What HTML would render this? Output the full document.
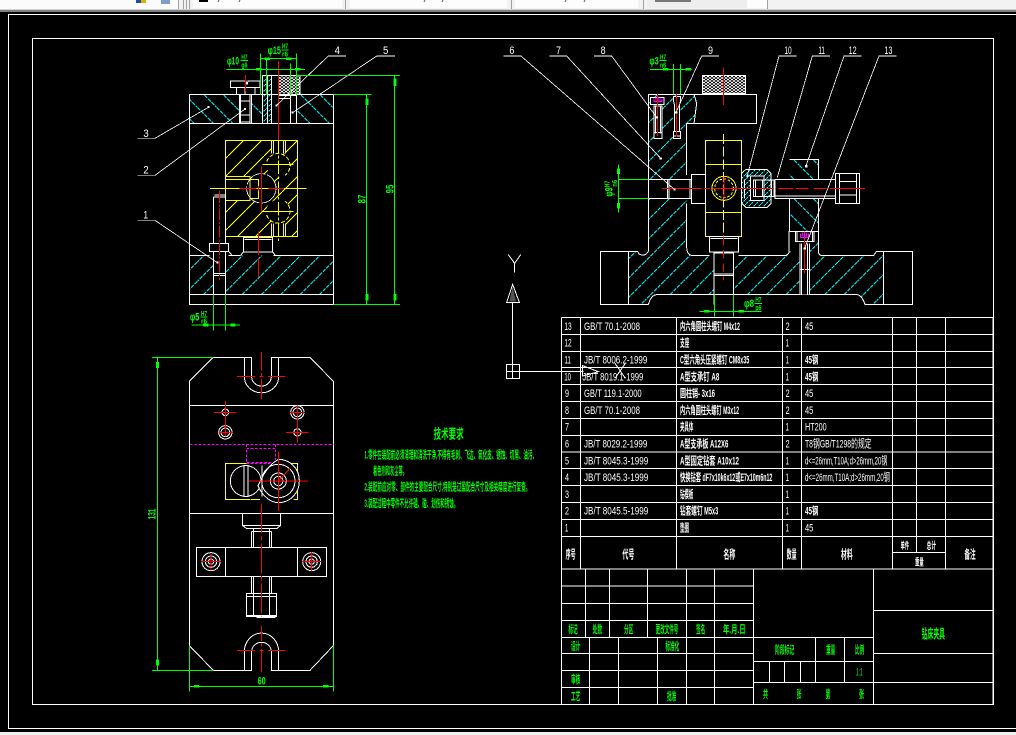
<!DOCTYPE html>
<html><head><meta charset="utf-8"><title>CAD drawing</title>
<style>
html,body{margin:0;padding:0;background:#000}
body{width:1016px;height:735px;overflow:hidden;position:relative}
svg{position:absolute;left:0;top:0;display:block}
.w{stroke:#fff;fill:none;stroke-width:3}
.thin{stroke:#fff;fill:none;stroke-width:2.4}
.g{stroke:#0f0;fill:none;stroke-width:3}
.r{stroke:#f00;fill:none;stroke-width:3}
.y{stroke:#ff0;fill:none;stroke-width:3}
.m{stroke:#f0f;fill:none;stroke-width:3}
.k{fill:#000;stroke:none}
.gf{fill:#0f0;stroke:none}
.wf{fill:#fff;stroke:none}
text{font-family:"Liberation Sans","Noto Sans CJK SC",sans-serif}
.t{fill:#fff;font-size:34px}
.c{fill:#fff;font-size:33px;font-weight:700;font-family:"Liberation Sans","Noto Sans CJK SC",sans-serif}
.gt{fill:#0f0;font-size:33px;font-weight:700}
.n{fill:#fff;font-size:34px}
.d{fill:#0f0;font-size:34px;font-weight:700}
</style></head><body>
<svg width="1016" height="735" viewBox="0 0 1016 735" xmlns="http://www.w3.org/2000/svg" shape-rendering="crispEdges">
<defs>
<pattern id="hb" width="58" height="58" patternUnits="userSpaceOnUse"><path d="M0 0L58 58" stroke="#0ff" stroke-width="2.6" stroke-dasharray="12 3"/></pattern>
<pattern id="hf" width="58" height="58" patternUnits="userSpaceOnUse"><path d="M58 0L0 58" stroke="#0ff" stroke-width="2.6" stroke-dasharray="12 3"/></pattern>
<pattern id="hd" width="15" height="15" patternUnits="userSpaceOnUse"><path d="M15 0L0 15" stroke="#0ff" stroke-width="2.4" stroke-dasharray="6 3"/></pattern>
<pattern id="hy" width="54" height="54" patternUnits="userSpaceOnUse"><path d="M54 0L0 54" stroke="#ff0" stroke-width="2.6"/></pattern>
<pattern id="kn" width="12" height="9" patternUnits="userSpaceOnUse"><rect width="12" height="9" fill="#000"/><path d="M0 0L6 4.5L12 0M0 9L6 4.5L12 9" stroke="#fff" stroke-width="2.6" fill="none"/></pattern>
</defs>

<!-- window chrome -->
<rect x="0" y="0" width="1016" height="9" fill="#f2f2f2"/>
<rect x="0" y="0" width="178" height="9" fill="#fbfbfb"/>
<rect x="193" y="0" width="149" height="8" fill="#fdfdfd"/>
<rect x="350" y="0" width="157" height="8" fill="#fdfdfd"/>
<rect x="515" y="0" width="123" height="8" fill="#fdfdfd"/>
<rect x="647" y="0" width="100" height="8" fill="#eeeeee"/>
<rect x="747" y="0" width="21" height="8" fill="#fdfdfd"/>
<path d="M178.5 0V9M183.5 0V9M186.5 0V9M189.5 0V9M345.5 0V9M511.5 0V9M643.5 0V9M767.5 0V9" stroke="#a0a0a0" stroke-width="1"/>
<rect x="136" y="0" width="5" height="3" fill="#1b4fa0"/><rect x="141" y="0" width="5" height="3" fill="#e0b000"/>
<rect x="161" y="0" width="9" height="4" fill="#7f9fc8"/>
<rect x="199" y="0" width="9" height="2" fill="#000"/>
<path d="M219 0l-1 2M240 0l-1 2M425 0l-1 2M443 0l-1 2M566 0l-1 2M585 0l-1 2" stroke="#555" stroke-width="1"/>
<rect x="655" y="0" width="36" height="2" fill="#777"/>
<rect x="0" y="9" width="1016" height="1" fill="#d0d0d0"/>
<rect x="0" y="10" width="1016" height="2" fill="#808080"/>
<rect x="0" y="12" width="1016" height="720" fill="#000"/>
<rect x="0" y="732" width="1016" height="3" fill="#f0f0f0"/>
<path d="M1016 14.5H8.5V728.5H1016" stroke="#fff" fill="none" stroke-width="1"/>
<rect x="32.5" y="38.5" width="961" height="666" stroke="#fff" fill="none" stroke-width="1"/>

<!-- LEFT VIEW -->
<g transform="translate(120,30) scale(.33333)">
<path d="M208 193H358V281H208Z" fill="url(#hb)"/>
<path d="M530 193H640V281H530Z" fill="url(#hb)"/>
<path d="M394 193H427V281H394Z" fill="url(#hb)"/>
<path d="M427 136H455V281H427Z" fill="url(#hd)"/>
<path d="M208 676H280V793H208Z" fill="url(#hf)"/>
<path d="M316 676H640V793H316Z" fill="url(#hf)"/>
<path class="w" d="M208 193H640V823H208ZM208 281H640M208 676H268M326 676H336M460 676H640M208 793H640"/>
<!-- upper items -->
<path class="w" d="M331 153H378L381 165L384 153H420V173H331ZM350 173V193H405V173M362 193V281M390 193V281M358 193V281M394 193V281M362 213H390M362 255H390M362 276H390M375 193V173"/>
<path class="w" d="M427 136H540V190H530V281M427 136V281M455 136V281M475 136V190M512 193V281M475 196H530M442 136V281M475 205H512"/>
<rect x="476" y="140" width="62" height="50" fill="url(#kn)"/>
<path class="r" d="M475 93V330M376 135V185"/>
<!-- yellow block -->
<rect x="316" y="331" width="217" height="289" fill="url(#hy)"/>
<circle cx="475" cy="405" r="36" class="k"/><circle cx="475" cy="545" r="36" class="k"/>
<rect x="455" y="331" width="42" height="40" class="k"/><rect x="455" y="580" width="42" height="40" class="k"/>
<rect x="316" y="440" width="100" height="72" class="k"/>
<circle cx="424" cy="475" r="44" class="k"/>
<path class="y" d="M316 331H533V620H316ZM455 331V371M460 331V371M490 331V371M497 331V371M455 580V620M460 580V620M490 580V620M497 580V620M427 403H520M427 545H520M316 440H390V512H316M316 448H415V505H390V448"/>
<path class="y" stroke-dasharray="12 6" d="M440 395A36 36 0 0 1 510 405A36 36 0 0 1 495 436M440 555A36 36 0 0 0 510 545A36 36 0 0 0 495 514"/>
<circle cx="424" cy="475" r="44" class="thin" stroke-dasharray="70 5"/>
<path class="y" d="M270 475H560"/>
<path class="y" stroke-dasharray="40 7 8 7" d="M475 330V640"/>
<path class="r" d="M358 475H410M445 475H492M424 410V545M416 468V482"/>
<!-- left pin -->
<path class="k" d="M280 500H316V640H280Z"/>
<path class="w" d="M283 495H316M280 501H316M280 501V640M316 495V640M268 640H326V664H268ZM280 664V793M316 664V793M280 730H316M280 737H316M280 793V823M316 793V823"/>
<path class="r" stroke-dasharray="36 5 6 5" d="M298 483V750"/>
<!-- lower block -->
<path class="w" d="M370 622H458V666H370ZM373 628H455M370 666L362 676M458 666L466 676M326 664L336 676H362M466 676H480"/>
<path class="r" stroke-dasharray="70 8 60 6" d="M416 605V750"/>
<!-- leaders -->
<g class="thin" stroke-width="2.4">
<path d="M52 325H105L265 232M52 436H105L375 237M52 571H105L292 698M678 78H625L470 226M825 78H770L518 248"/>
</g>
<path class="wf" d="M262 228h6v6h-6zM372 234h6v6h-6zM289 695h6v6h-6zM466 223h7v7h-7zM515 245h6v6h-6z"/>
<text class="n" x="70" y="321" textLength="16" lengthAdjust="spacingAndGlyphs">3</text>
<text class="n" x="70" y="431" textLength="16" lengthAdjust="spacingAndGlyphs">2</text>
<text class="n" x="70" y="565" textLength="14" lengthAdjust="spacingAndGlyphs">1</text>
<text class="n" x="644" y="72" textLength="16" lengthAdjust="spacingAndGlyphs">4</text>
<text class="n" x="789" y="72" textLength="16" lengthAdjust="spacingAndGlyphs">5</text>
<!-- dims -->
<path class="g" d="M530 136H840M640 193H755M640 823H840M740 193V823M824 136V823M420 86H530M421 70V195M530 70V195M320 118H555M440 86V195M511 100V195M215 885H360M280 793V902M316 793V902"/>
<path class="gf" d="M736 205h9v20h-9zM736 792h9v20h-9zM820 146h9v22h-9zM820 792h9v20h-9zM434 82h16v8h-16zM498 82h16v8h-16zM408 114h16v8h-16zM525 114h16v8h-16zM249 881h16v8h-16zM331 881h16v8h-16z"/>
<text class="d" x="0" y="0" transform="translate(737,520) rotate(-90)" textLength="26" lengthAdjust="spacingAndGlyphs">87</text>
<text class="d" x="0" y="0" transform="translate(821,490) rotate(-90)" textLength="26" lengthAdjust="spacingAndGlyphs">95</text>
<text class="d" x="443" y="72" textLength="40" lengthAdjust="spacingAndGlyphs">φ15</text>
<text class="d" style="font-size:22px" x="486" y="56" textLength="18" lengthAdjust="spacingAndGlyphs">H7</text><path class="g" d="M485 60H505"/>
<text class="d" style="font-size:22px" x="486" y="80" textLength="18" lengthAdjust="spacingAndGlyphs">r6</text>
<text class="d" x="321" y="104" textLength="36" lengthAdjust="spacingAndGlyphs">φ10</text>
<text class="d" style="font-size:22px" x="364" y="88" textLength="18" lengthAdjust="spacingAndGlyphs">H7</text><path class="g" d="M362 92H384"/>
<text class="d" style="font-size:22px" x="364" y="113" textLength="18" lengthAdjust="spacingAndGlyphs">g6</text>
<text class="d" x="210" y="871" textLength="28" lengthAdjust="spacingAndGlyphs">φ5</text>
<text class="d" style="font-size:22px" x="243" y="858" textLength="18" lengthAdjust="spacingAndGlyphs">H7</text><path class="g" d="M241 861H263"/>
<text class="d" style="font-size:22px" x="243" y="880" textLength="18" lengthAdjust="spacingAndGlyphs">r6</text>
</g>

<!-- RIGHT VIEW -->
<g transform="translate(490,30) scale(.33333)">
<path fill="url(#hf)" d="M475 193H612L620 220L610 281H590V448H475ZM475 505H590V650Q590 677 610 677H672V794H500Q488 794 480 810L475 823H415V664H443L447 672Q465 680 475 664Z"/>
<path fill="url(#hf)" d="M731 677H897V664H930V794H731ZM958 635H985V664L1000 677H1150L1160 664H1180V823H1125Q1115 794 1100 794H958Z"/>
<path fill="url(#hb)" d="M898 388H986V448H898ZM898 505H986V605H898Z"/>
<path fill="url(#hd)" d="M768 418H830L843 430V520L830 533H768L755 520V430Z"/>
<path class="k" d="M482 202H522V224H516V326H492V224H482ZM550 200H572V326H550Z"/>
<path class="w" d="M415 664H331V823H475L480 810Q488 794 500 794H1100Q1115 794 1125 823H1268V664H1160L1150 677H1000Q985 677 985 664V605M415 664V823M1180 664V823M415 664H443L447 672Q465 680 472 668L475 664V193H800V281H612L620 220L612 193M590 281H612M590 281V435M590 520V650Q590 677 610 677H658M746 677H880Q897 677 897 664V605H986M475 448H533V505H475M590 448H604M590 505H604M898 388H986V448M898 505V605M986 388V448M986 505V605"/>
<!-- knurl -->
<rect x="638" y="137" width="128" height="53" fill="url(#kn)"/>
<path class="w" d="M638 137H766V190H638Z"/>
<!-- yellow -->
<path class="y" d="M646 331H755V620H646ZM646 403H755M646 548H755"/>
<circle cx="702" cy="475" r="36" class="y"/><circle cx="702" cy="475" r="28" class="y" stroke-dasharray="8 5"/>
<path class="y" stroke-dasharray="30 8" d="M700 312V620"/>
<!-- left pin and block -->
<path class="w" d="M533 448H604V505H533ZM537 448V505M600 448V505M604 433H646V520H604Z"/>
<!-- right mechanism -->
<path class="w" d="M768 418H830L843 430V520L830 533H768L755 520V430ZM763 448V505"/>
<path class="k" d="M782 438H822V512H782Z"/>
<path class="w" d="M782 438H822V512H782ZM790 450H852V500H790ZM797 450V500M818 450V500M845 450V500"/>
<path class="k" d="M855 448H1036V505H855Z"/>
<path class="w" d="M855 448H1036V505H855ZM855 498H1036M1036 430H1108V520H1036ZM1048 430V520M1100 430V520M1048 455H1100M1048 495H1100"/>
<path class="w" d="M658 666H746V620H658ZM662 625H742M672 666V794M731 666V794M672 732H731M672 737H731M672 669H731M672 794V823M731 794V823"/>
<!-- screw 13 -->
<path class="k" d="M916 605H972V635H958V794H930V635H916Z"/>
<path class="w" d="M916 605H972V635H916ZM921 605V635M967 605V635M930 640V794M958 640V794M935 640V794M953 640V794M930 718H958"/>
<path class="m" d="M932 610V622H956V610M944 605V628M938 608V620M950 608V620"/>
<path class="r" d="M944 628V730"/>
<!-- top-left screws -->
<path class="w" d="M482 202H522V224H482ZM492 228H516V326H492ZM497 228V310M512 228V310M492 308H516"/>
<path class="m" d="M492 205V214H516V205M504 200V217M498 203V212M510 203V212"/>
<path class="r" d="M503 190V318"/>
<path class="w" d="M550 200H572V210L568 228V304H572V326H550V304H554V228L550 210ZM550 304H572M550 318H572"/>
<path class="r" d="M560 190V320"/>
<!-- center lines -->
<path class="r" d="M700 112V225"/>
<path class="r" stroke-dasharray="120 6 18 12 180 12 46 6 40 14 40 10 230 5" d="M516 475H1125"/>
<path class="r" d="M667 475H738M702 440V510"/>
<path class="r" stroke-dasharray="26 14" d="M700 620V750"/>
<!-- leaders -->
<path class="thin" d="M40 78H93L553 478M178 78H230L512 385M312 78H365L500 262M687 78H635L558 247M920 78H867L772 437M1020 78H967L862 442M1115 78H1062L948 408M1220 78H1167L944 655"/>
<path class="wf" d="M550 475h7v7h-7zM509 382h7v7h-7zM497 259h7v7h-7zM555 244h7v7h-7zM769 434h7v7h-7zM945 405h7v7h-7zM941 652h7v7h-7z"/>
<text class="n" x="58" y="72" textLength="15" lengthAdjust="spacingAndGlyphs">6</text>
<text class="n" x="198" y="72" textLength="15" lengthAdjust="spacingAndGlyphs">7</text>
<text class="n" x="332" y="72" textLength="15" lengthAdjust="spacingAndGlyphs">8</text>
<text class="n" x="654" y="72" textLength="15" lengthAdjust="spacingAndGlyphs">9</text>
<text class="n" x="883" y="72" textLength="22" lengthAdjust="spacingAndGlyphs">10</text>
<text class="n" x="985" y="72" textLength="20" lengthAdjust="spacingAndGlyphs">11</text>
<text class="n" x="1076" y="72" textLength="24" lengthAdjust="spacingAndGlyphs">12</text>
<text class="n" x="1183" y="72" textLength="24" lengthAdjust="spacingAndGlyphs">13</text>
<!-- dims -->
<path class="g" d="M480 118H604M550 102V193M572 102V193M385 403V548M385 448H475M385 505H475M628 844H815M673 794V860M730 794V860"/>
<path class="gf" d="M519 114h16v8h-16zM587 114h16v8h-16zM381 416h9v16h-9zM381 519h9v16h-9zM642 840h16v8h-16zM746 840h16v8h-16z"/>
<text class="d" x="478" y="104" textLength="28" lengthAdjust="spacingAndGlyphs">φ3</text>
<text class="d" style="font-size:22px" x="510" y="88" textLength="18" lengthAdjust="spacingAndGlyphs">H7</text><path class="g" d="M508 92H530"/>
<text class="d" style="font-size:22px" x="510" y="112" textLength="18" lengthAdjust="spacingAndGlyphs">n6</text>
<text class="d" transform="translate(368,500) rotate(-90)" x="0" y="0" textLength="28" lengthAdjust="spacingAndGlyphs">φ9</text>
<text class="d" style="font-size:22px" transform="translate(358,472) rotate(-90)" x="0" y="0" textLength="20" lengthAdjust="spacingAndGlyphs">H7</text>
<text class="d" style="font-size:22px" transform="translate(381,470) rotate(-90)" x="0" y="0" textLength="20" lengthAdjust="spacingAndGlyphs">n6</text>
<text class="d" x="762" y="831" textLength="30" lengthAdjust="spacingAndGlyphs">φ8</text>
<text class="d" style="font-size:22px" x="796" y="816" textLength="18" lengthAdjust="spacingAndGlyphs">H7</text><path class="g" d="M794 820H816"/>
<text class="d" style="font-size:22px" x="796" y="840" textLength="18" lengthAdjust="spacingAndGlyphs">p6</text>
</g>

<!-- UCS icon -->
<g transform="translate(500,250) scale(.33333)">
<path class="w" d="M25 14L44 40L62 14M44 40V68M38 103L20 157H58ZM38 157V343M19 343H59V385H19ZM38 343V385M19 364H59M59 364H250M248 347L295 365L248 378ZM345 340L376 385M376 340L345 385"/>
<path d="M38 108L28 155H48Z" fill="#555"/>
</g>

<!-- BOTTOM-LEFT VIEW -->
<g transform="translate(130,340) scale(.33333)">
<path class="w" d="M178 124L250 52H365V110A29.5 28 0 0 0 424 110V52H540L610 124V917L540 991H424V935A29.5 28 0 0 0 365 935V991H250L178 917ZM343 52V110A51 48 0 0 0 446 110V52M343 991V935A51 55 0 0 1 446 935V991M178 196H610M178 520H610"/>
<path class="r" d="M321 109H375M414 109H467M388 109H400M321 931H375M414 931H467M388 931H400"/>
<path class="r" stroke-dasharray="55 8 10 8 60 8" d="M394 36V182"/>
<path class="r" stroke-dasharray="45 7 10 7 70" d="M394 858V1005"/>
<!-- holes -->
<circle cx="286" cy="217" r="10" class="w"/>
<circle cx="286" cy="277" r="20" class="w"/><circle cx="286" cy="277" r="13" class="w"/>
<circle cx="502" cy="217" r="20" class="w"/><circle cx="502" cy="217" r="13" class="w"/>
<circle cx="502" cy="277" r="11" class="w"/>
<path class="r" d="M252 217H320M286 183V290M266 277H309M480 217H524M502 197V308M468 277H536"/>
<!-- magenta -->
<path class="m" stroke-dasharray="8 5" d="M180 313H610M349 325H437V367H349ZM349 313V325M437 313V325"/>
<!-- yellow -->
<path class="y" d="M360 479H286V370H349M440 370H503V479H490M362 479H390"/>
<path class="m" d="M349 370H437" stroke-dasharray="8 5"/>
<!-- mechanism -->
<circle cx="347" cy="423" r="46" class="w"/>
<path class="k" d="M342 376H354V470H342Z"/>
<path class="w" d="M342 376H354V470H342Z"/>
<path class="k" d="M445 358A65 65 0 1 1 445 488Q410 488 385 440L400 405Q420 358 445 358Z"/>
<path class="w" d="M445 358C480 358 508 385 508 423C508 460 480 488 445 488C420 488 395 465 384 437L400 405Q420 372 445 358Z"/>
<circle cx="445" cy="423" r="50" class="w"/><circle cx="445" cy="423" r="24" class="w"/><circle cx="445" cy="423" r="14" class="w"/>
<path class="w" d="M396 376V470"/>
<path class="r" d="M357 423H534M445 335V513M445 423L480 385"/>
<!-- lower -->
<path class="w" d="M337 520V556H452V520M337 556L350 566H440L452 556M370 566V575H418V566M364 575H425M364 575V622M370 575V622M418 575V622M425 575V622M199 622H590V710H199ZM286 622V710M502 622V710M364 710V760M370 710V760M418 710V760M425 710V760M349 760H440V830H349ZM370 760V830M418 760V830M349 770H440M349 826H440M380 832H436"/>
<circle cx="243" cy="665" r="27" class="w"/><circle cx="243" cy="665" r="17" class="w"/><circle cx="243" cy="665" r="8" class="w"/>
<circle cx="545" cy="665" r="27" class="w"/><circle cx="545" cy="665" r="17" class="w"/><circle cx="545" cy="665" r="8" class="w"/>
<path class="r" d="M214 665H272M243 640V692M516 665H574M545 636V694"/>
<path class="r" stroke-dasharray="90 8 14 8" d="M394 490V830"/>
<!-- dims -->
<path class="g" d="M66 52H250M66 991H250M82 52V991M178 917V1055M610 917V1055M178 1039H610"/>
<path class="gf" d="M78 66h9v18h-9zM78 959h9v18h-9zM192 1035h15v8h-15zM579 1035h16v8h-16z"/>
<text class="d" transform="translate(76,538) rotate(-90)" x="0" y="0" textLength="32" lengthAdjust="spacingAndGlyphs">131</text>
<text class="d" x="383" y="1034" textLength="24" lengthAdjust="spacingAndGlyphs">60</text>
</g>

<!-- TECH REQUIREMENTS -->
<g transform="translate(355,415) scale(.33333)">
<text class="gt" style="font-size:40px" x="236" y="70" textLength="90" lengthAdjust="spacingAndGlyphs">技术要求</text>
<text class="gt" x="28" y="131" textLength="518" lengthAdjust="spacingAndGlyphs">1.零件在装配前必须清理和清洗干净,不得有毛刺、飞边、氧化皮、锈蚀、切屑、油污、</text>
<text class="gt" x="54" y="178" textLength="102" lengthAdjust="spacingAndGlyphs">着色剂和灰尘等。</text>
<text class="gt" x="28" y="227" textLength="498" lengthAdjust="spacingAndGlyphs">2.装配前应对零、部件的主要配合尺寸,特别是过盈配合尺寸及相关精度进行复查。</text>
<text class="gt" x="28" y="276" textLength="282" lengthAdjust="spacingAndGlyphs">3.装配过程中零件不允许磕、碰、划伤和锈蚀。</text>
</g>

<!-- PARTS TABLE -->
<g transform="translate(555,310) scale(.33333)">
<path class="w" d="M19 22H1314V778M19 22V778M19 73H1314M19 124H1314M19 173H1314M19 224H1314M19 275H1314M19 325H1314M19 376H1314M19 426H1314M19 476H1314M19 527H1314M19 578H1314M19 629H1314M19 680H1314M76 22V778M364 22V778M682 22V778M739 22V778M1012 22V778M1084 22V727M1171 22V778M1012 727H1171"/>
<text class="t" x="28" y="60" textLength="22" lengthAdjust="spacingAndGlyphs">13</text><text class="t" x="87" y="60" textLength="168" lengthAdjust="spacingAndGlyphs">GB/T 70.1-2008</text><text class="c" x="375" y="60" textLength="180" lengthAdjust="spacingAndGlyphs">内六角圆柱头螺钉 M4x12</text><text class="t" x="692" y="60" textLength="12" lengthAdjust="spacingAndGlyphs">2</text><text class="t" x="750" y="60" textLength="25" lengthAdjust="spacingAndGlyphs">45</text>
<text class="t" x="28" y="110" textLength="22" lengthAdjust="spacingAndGlyphs">12</text><text class="c" x="375" y="110" textLength="28" lengthAdjust="spacingAndGlyphs">支座</text><text class="t" x="692" y="110" textLength="10" lengthAdjust="spacingAndGlyphs">1</text>
<text class="t" x="28" y="161" textLength="20" lengthAdjust="spacingAndGlyphs">11</text><text class="t" x="87" y="161" textLength="190" lengthAdjust="spacingAndGlyphs">JB/T 8006.2-1999</text><text class="c" x="375" y="161" textLength="208" lengthAdjust="spacingAndGlyphs">C型六角头压紧螺钉 CM8x35</text><text class="t" x="692" y="161" textLength="10" lengthAdjust="spacingAndGlyphs">1</text><text class="c" x="750" y="161" textLength="40" lengthAdjust="spacingAndGlyphs">45钢</text>
<text class="t" x="28" y="211" textLength="20" lengthAdjust="spacingAndGlyphs">10</text><text class="t" x="82" y="211" textLength="183" lengthAdjust="spacingAndGlyphs">JB/T 8019.1-1999</text><text class="c" x="375" y="211" textLength="118" lengthAdjust="spacingAndGlyphs">A型支承钉 A8</text><text class="t" x="692" y="211" textLength="10" lengthAdjust="spacingAndGlyphs">1</text><text class="c" x="750" y="211" textLength="40" lengthAdjust="spacingAndGlyphs">45钢</text>
<text class="t" x="30" y="261" textLength="12" lengthAdjust="spacingAndGlyphs">9</text><text class="t" x="87" y="261" textLength="173" lengthAdjust="spacingAndGlyphs">GB/T 119.1-2000</text><text class="c" x="375" y="261" textLength="105" lengthAdjust="spacingAndGlyphs">圆柱销- 3x16</text><text class="t" x="692" y="261" textLength="12" lengthAdjust="spacingAndGlyphs">2</text><text class="t" x="750" y="261" textLength="25" lengthAdjust="spacingAndGlyphs">45</text>
<text class="t" x="30" y="312" textLength="12" lengthAdjust="spacingAndGlyphs">8</text><text class="t" x="87" y="312" textLength="168" lengthAdjust="spacingAndGlyphs">GB/T 70.1-2008</text><text class="c" x="375" y="312" textLength="177" lengthAdjust="spacingAndGlyphs">内六角圆柱头螺钉 M3x12</text><text class="t" x="692" y="312" textLength="12" lengthAdjust="spacingAndGlyphs">2</text><text class="t" x="750" y="312" textLength="25" lengthAdjust="spacingAndGlyphs">45</text>
<text class="t" x="30" y="362" textLength="12" lengthAdjust="spacingAndGlyphs">7</text><text class="c" x="375" y="362" textLength="40" lengthAdjust="spacingAndGlyphs">夹具体</text><text class="t" x="692" y="362" textLength="10" lengthAdjust="spacingAndGlyphs">1</text><text class="t" x="750" y="362" textLength="65" lengthAdjust="spacingAndGlyphs">HT200</text>
<text class="t" x="30" y="413" textLength="12" lengthAdjust="spacingAndGlyphs">6</text><text class="t" x="87" y="413" textLength="190" lengthAdjust="spacingAndGlyphs">JB/T 8029.2-1999</text><text class="c" x="375" y="413" textLength="145" lengthAdjust="spacingAndGlyphs">A型支承板 A12X6</text><text class="t" x="692" y="413" textLength="12" lengthAdjust="spacingAndGlyphs">2</text><text class="t" x="750" y="413" textLength="200" lengthAdjust="spacingAndGlyphs">T8钢GB/T1298的规定</text>
<text class="t" x="30" y="463" textLength="12" lengthAdjust="spacingAndGlyphs">5</text><text class="t" x="87" y="463" textLength="193" lengthAdjust="spacingAndGlyphs">JB/T 8045.3-1999</text><text class="c" x="375" y="463" textLength="177" lengthAdjust="spacingAndGlyphs">A型固定钻套 A10x12</text><text class="t" x="692" y="463" textLength="10" lengthAdjust="spacingAndGlyphs">1</text><text class="t" x="750" y="463" textLength="247" lengthAdjust="spacingAndGlyphs">d&lt;=26mm,T10A;d&gt;26mm,20钢</text>
<text class="t" x="30" y="513" textLength="12" lengthAdjust="spacingAndGlyphs">4</text><text class="t" x="87" y="513" textLength="193" lengthAdjust="spacingAndGlyphs">JB/T 8045.3-1999</text><text class="c" x="375" y="513" textLength="277" lengthAdjust="spacingAndGlyphs">快换钻套 dF7x10k6x12或E7x10m6n12</text><text class="t" x="692" y="513" textLength="10" lengthAdjust="spacingAndGlyphs">1</text><text class="t" x="750" y="513" textLength="255" lengthAdjust="spacingAndGlyphs">d&lt;=26mm,T10A;d&gt;26mm,20钢</text>
<text class="t" x="30" y="564" textLength="12" lengthAdjust="spacingAndGlyphs">3</text><text class="c" x="375" y="564" textLength="40" lengthAdjust="spacingAndGlyphs">钻模板</text><text class="t" x="692" y="564" textLength="10" lengthAdjust="spacingAndGlyphs">1</text>
<text class="t" x="30" y="614" textLength="12" lengthAdjust="spacingAndGlyphs">2</text><text class="t" x="87" y="614" textLength="193" lengthAdjust="spacingAndGlyphs">JB/T 8045.5-1999</text><text class="c" x="375" y="614" textLength="115" lengthAdjust="spacingAndGlyphs">钻套螺钉 M5x3</text><text class="t" x="692" y="614" textLength="10" lengthAdjust="spacingAndGlyphs">1</text><text class="c" x="750" y="614" textLength="40" lengthAdjust="spacingAndGlyphs">45钢</text>
<text class="t" x="30" y="665" textLength="10" lengthAdjust="spacingAndGlyphs">1</text><text class="c" x="375" y="665" textLength="27" lengthAdjust="spacingAndGlyphs">垫圈</text><text class="t" x="692" y="665" textLength="10" lengthAdjust="spacingAndGlyphs">1</text><text class="t" x="750" y="665" textLength="25" lengthAdjust="spacingAndGlyphs">45</text>
<text class="c" style="font-size:36px" x="32" y="746" textLength="30" lengthAdjust="spacingAndGlyphs">序号</text>
<text class="c" style="font-size:36px" x="202" y="746" textLength="36" lengthAdjust="spacingAndGlyphs">代号</text>
<text class="c" style="font-size:36px" x="505" y="746" textLength="36" lengthAdjust="spacingAndGlyphs">名称</text>
<text class="c" style="font-size:36px" x="695" y="746" textLength="30" lengthAdjust="spacingAndGlyphs">数量</text>
<text class="c" style="font-size:36px" x="858" y="746" textLength="35" lengthAdjust="spacingAndGlyphs">材料</text>
<text class="c" style="font-size:29px" x="1037" y="717" textLength="25" lengthAdjust="spacingAndGlyphs">单件</text>
<text class="c" style="font-size:29px" x="1115" y="717" textLength="28" lengthAdjust="spacingAndGlyphs">总计</text>
<text class="c" style="font-size:29px" x="1080" y="766" textLength="26" lengthAdjust="spacingAndGlyphs">重量</text>
<text class="c" style="font-size:36px" x="1228" y="746" textLength="34" lengthAdjust="spacingAndGlyphs">备注</text>
</g>

<!-- TITLE BLOCK -->
<g transform="translate(555,560) scale(.33333)">
<path class="w" d="M19 27H1314V433H19ZM19 78H595M19 130H595M19 181H595M19 232H955M19 280H595M19 331H595M19 382H595M595 27V433M955 27V433M91 27V232M163 27V232M277 27V232M394 27V433M478 27V433M103 232V433M190 232V433M307 232V433M595 304H955M595 367H1314M781 232V367M868 232V367M643 304V367M688 304V367M736 304V367M955 151H1314M955 280H1314"/>
<text class="gt" x="40" y="219" textLength="28" lengthAdjust="spacingAndGlyphs">标记</text>
<text class="gt" x="113" y="219" textLength="28" lengthAdjust="spacingAndGlyphs">处数</text>
<text class="gt" x="207" y="219" textLength="28" lengthAdjust="spacingAndGlyphs">分区</text>
<text class="gt" x="302" y="219" textLength="68" lengthAdjust="spacingAndGlyphs">更改文件号</text>
<text class="gt" x="423" y="219" textLength="28" lengthAdjust="spacingAndGlyphs">签名</text>
<text class="gt" x="504" y="219" textLength="68" lengthAdjust="spacingAndGlyphs">年.月.日</text>
<text class="gt" x="48" y="270" textLength="28" lengthAdjust="spacingAndGlyphs">设计</text>
<text class="gt" x="331" y="270" textLength="42" lengthAdjust="spacingAndGlyphs">标准化</text>
<text class="gt" x="48" y="369" textLength="28" lengthAdjust="spacingAndGlyphs">审核</text>
<text class="gt" x="48" y="420" textLength="28" lengthAdjust="spacingAndGlyphs">工艺</text>
<text class="gt" x="336" y="420" textLength="28" lengthAdjust="spacingAndGlyphs">批准</text>
<text class="gt" x="660" y="280" textLength="58" lengthAdjust="spacingAndGlyphs">阶段标记</text>
<text class="gt" x="813" y="280" textLength="28" lengthAdjust="spacingAndGlyphs">重量</text>
<text class="gt" x="900" y="280" textLength="28" lengthAdjust="spacingAndGlyphs">比例</text>
<text class="gt" style="font-weight:400;fill:#0f0" x="903" y="347" textLength="20" lengthAdjust="spacingAndGlyphs">1:1</text>
<text class="gt" x="624" y="414" textLength="15" lengthAdjust="spacingAndGlyphs">共</text>
<text class="gt" x="725" y="414" textLength="14" lengthAdjust="spacingAndGlyphs">张</text>
<text class="gt" x="812" y="414" textLength="14" lengthAdjust="spacingAndGlyphs">第</text>
<text class="gt" x="912" y="414" textLength="15" lengthAdjust="spacingAndGlyphs">张</text>
<text class="gt" style="font-size:40px" x="1100" y="236" textLength="70" lengthAdjust="spacingAndGlyphs">钻床夹具</text>
</g>
</svg>
</body></html>
